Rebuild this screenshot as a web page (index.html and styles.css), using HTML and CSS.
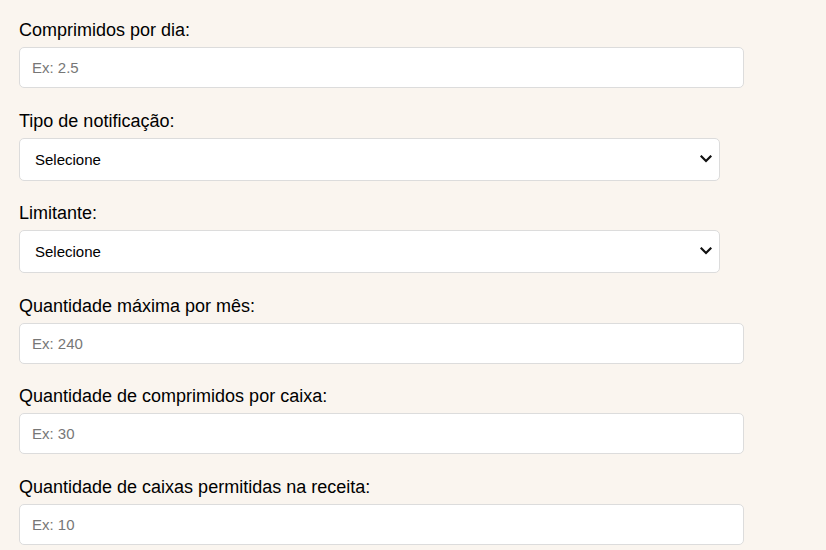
FILE: index.html
```html
<!DOCTYPE html>
<html lang="pt-BR">
<head>
<meta charset="utf-8">
<title>Formulário</title>
<link rel="stylesheet" href="styles.css">
</head>
<body>
<form class="form">
  <div class="field">
    <label class="label" for="f1">Comprimidos por dia:</label>
    <input class="input" id="f1" type="text" placeholder="Ex: 2.5">
  </div>
  <div class="field">
    <label class="label" for="f2">Tipo de notificação:</label>
    <div class="select-wrap">
      <select class="select" id="f2"><option>Selecione</option></select>
      <svg class="chevron" width="12" height="8" viewBox="0 0 12 8"><path d="M1.5 1.5 L6 6 L10.5 1.5" fill="none" stroke="#111" stroke-width="2.2" stroke-linecap="square" stroke-linejoin="miter"/></svg>
    </div>
  </div>
  <div class="field">
    <label class="label" for="f3">Limitante:</label>
    <div class="select-wrap">
      <select class="select" id="f3"><option>Selecione</option></select>
      <svg class="chevron" width="12" height="8" viewBox="0 0 12 8"><path d="M1.5 1.5 L6 6 L10.5 1.5" fill="none" stroke="#111" stroke-width="2.2" stroke-linecap="square" stroke-linejoin="miter"/></svg>
    </div>
  </div>
  <div class="field">
    <label class="label" for="f4">Quantidade máxima por mês:</label>
    <input class="input" id="f4" type="text" placeholder="Ex: 240">
  </div>
  <div class="field">
    <label class="label" for="f5">Quantidade de comprimidos por caixa:</label>
    <input class="input" id="f5" type="text" placeholder="Ex: 30">
  </div>
  <div class="field">
    <label class="label" for="f6">Quantidade de caixas permitidas na receita:</label>
    <input class="input" id="f6" type="text" placeholder="Ex: 10">
  </div>
</form>
</body>
</html>
```
FILE: styles.css
```css
html, body {
  margin: 0;
  padding: 0;
  background: #faf5ef;
  font-family: "Liberation Sans", Arial, sans-serif;
  color: #000;
}

.form {
  width: 725px;
  padding: 20px 0 0 19px;
  display: flex;
  flex-direction: column;
  gap: 22.6px;
}

.field {
  display: flex;
  flex-direction: column;
  align-items: flex-start;
}

.label {
  font-size: 18px;
  line-height: 21px;
  margin-bottom: 6px;
}

.input {
  box-sizing: border-box;
  width: 725px;
  height: 41px;
  padding: 0 12px;
  border: 1px solid #dcdcdc;
  border-radius: 5px;
  background: #fff;
  font-family: "Liberation Sans", Arial, sans-serif;
  font-size: 15px;
  color: #000;
  outline: none;
}

.input::placeholder {
  color: #777;
}

.select-wrap {
  position: relative;
  width: 701px;
}

.select {
  box-sizing: border-box;
  width: 701px;
  height: 43px;
  padding: 0 30px 0 15px;
  border: 1px solid #dcdcdc;
  border-radius: 5px;
  background: #fff;
  font-family: "Liberation Sans", Arial, sans-serif;
  font-size: 15px;
  color: #000;
  appearance: none;
  -webkit-appearance: none;
  outline: none;
}

.chevron {
  position: absolute;
  right: 8px;
  top: 17px;
  pointer-events: none;
}
```
